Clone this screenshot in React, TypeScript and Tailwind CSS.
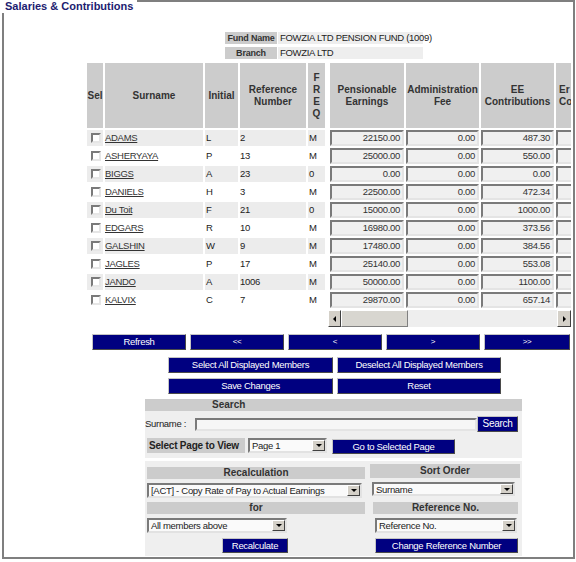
import React from "react";

type Row = [string, string, string, string, string, string, string, string];

const rows: Row[] = [
  ["ADAMS", "L", "2", "M", "22150.00", "0.00", "487.30", "0.00"],
  ["ASHERYAYA", "P", "13", "M", "25000.00", "0.00", "550.00", "0.00"],
  ["BIGGS", "A", "23", "0", "0.00", "0.00", "0.00", "0.00"],
  ["DANIELS", "H", "3", "M", "22500.00", "0.00", "472.34", "0.00"],
  ["Du Toit", "F", "21", "0", "15000.00", "0.00", "1000.00", "0.00"],
  ["EDGARS", "R", "10", "M", "16980.00", "0.00", "373.56", "0.00"],
  ["GALSHIN", "W", "9", "M", "17480.00", "0.00", "384.56", "0.00"],
  ["JAGLES", "P", "17", "M", "25140.00", "0.00", "553.08", "0.00"],
  ["JANDO", "A", "1006", "M", "50000.00", "0.00", "1100.00", "0.00"],
  ["KALVIX", "C", "7", "M", "29870.00", "0.00", "657.14", "0.00"],
];

function Btn({ label, className = "" }: { label: string; className?: string }) {
  return (
    <button
      className={`flex items-center justify-center bg-[#000080] text-white leading-none whitespace-nowrap border border-t-[#c4c4c4] border-l-[#c4c4c4] border-r-[#4a4a4a] border-b-[#4a4a4a] ${className}`}
    >
      {label}
    </button>
  );
}

function Select({ value, className = "" }: { value: string; className?: string }) {
  return (
    <div
      className={`flex items-stretch bg-[#fafafa] border-2 border-t-[#7a7a7a] border-l-[#7a7a7a] border-r-[#e2e2e2] border-b-[#e2e2e2] ${className}`}
    >
      <span className="flex-1 pl-[2px] truncate leading-[11px] self-center">{value}</span>
      <span className="w-[13px] flex items-center justify-center bg-[#d4d0c8] border border-t-white border-l-white border-r-[#404040] border-b-[#404040]">
        <span className="w-0 h-0 border-l-[3px] border-r-[3px] border-t-[3px] border-l-transparent border-r-transparent border-t-black" />
      </span>
    </div>
  );
}

function Head({ children, className = "" }: { children: React.ReactNode; className?: string }) {
  return (
    <div className={`bg-[#cccccc] font-bold text-[#333] text-center text-[10px] tracking-normal leading-[12px] ${className}`}>
      {children}
    </div>
  );
}

function FundLabel({ children }: { children: React.ReactNode }) {
  return (
    <div className="w-[52px] bg-[#cccccc] font-bold text-[#333] text-center text-[9px] tracking-[-0.2px] leading-[12px] whitespace-nowrap">
      {children}
    </div>
  );
}

export default function App() {
  return (
    <div className="w-[576px] h-[562px] bg-white overflow-hidden font-['Liberation_Sans',Arial,sans-serif] text-[9.5px] tracking-[-0.3px] text-[#222]">
      <div className="ml-[2px] w-[573px] h-[559px] border-2 border-[#7f7f7f]">
        <div className="-mt-[2px] -ml-[2px] w-fit bg-white pl-[3px] pr-[4px] h-[13px] text-[11px] tracking-normal leading-[12px] font-bold text-[#1c1c70]">
          Salaries &amp; Contributions
        </div>

        {/* fund info */}
        <div className="mt-[19px] ml-[221px] flex flex-col gap-[3px]">
          <div className="flex gap-[1px] h-[12px]">
            <FundLabel>Fund Name</FundLabel>
            <div className="w-[145px] bg-[#eeeeee] leading-[12px] pl-[2px] whitespace-nowrap">FOWZIA LTD PENSION FUND (1009)</div>
          </div>
          <div className="flex gap-[1px] h-[12px]">
            <FundLabel>Branch</FundLabel>
            <div className="w-[145px] bg-[#eeeeee] leading-[12px] pl-[2px]">FOWZIA LTD</div>
          </div>
        </div>

        {/* members table */}
        <div className="mt-[4px] ml-[83px] flex items-start">
          <div className="grid grid-cols-[16px_98px_33px_66px_17px] grid-rows-[65px] auto-rows-[16px] gap-[2px]">
            <Head className="flex items-center justify-center">Sel</Head>
            <Head className="flex items-center justify-center">Surname</Head>
            <Head className="flex items-center justify-center">Initial</Head>
            <Head className="flex items-center justify-center">
              Reference
              <br />
              Number
            </Head>
            <Head className="flex items-center justify-center leading-[10px]">
              F<br />R<br />E<br />Q
            </Head>
            {rows.map((r, i) => {
              const bg = i % 2 === 0 ? "bg-[#ececec]" : "bg-white";
              return (
                <React.Fragment key={r[0]}>
                  <div className={`${bg} flex items-center pl-[4px]`}>
                    <span className="w-[10px] h-[10px] bg-white border-2 border-t-[#7a7a7a] border-l-[#7a7a7a] border-r-[#e6e6e6] border-b-[#e6e6e6]" />
                  </div>
                  <div className={`${bg} leading-[16px] underline text-[#333]`}>{r[0]}</div>
                  <div className={`${bg} leading-[16px] pl-[1px]`}>{r[1]}</div>
                  <div className={`${bg} leading-[16px]`}>{r[2]}</div>
                  <div className={`${bg} leading-[16px] pl-[1px]`}>{r[3]}</div>
                </React.Fragment>
              );
            })}
          </div>

          <div className="ml-[3px] w-[243px] flex flex-col">
            <div className="w-[243px] overflow-hidden">
              <div className="pl-[2px] w-max grid grid-cols-[74px_73px_73px_74px] grid-rows-[65px] auto-rows-[16px] gap-[2px]">
                <Head className="flex items-center justify-center">
                  Pensionable
                  <br />
                  Earnings
                </Head>
                <Head className="flex items-center justify-center">
                  Administration
                  <br />
                  Fee
                </Head>
                <Head className="flex items-center justify-center">
                  EE
                  <br />
                  Contributions
                </Head>
                <Head className="flex items-center justify-start pl-[3px] text-left">
                  Er
                  <br />
                  Contributions
                </Head>
                {rows.map((r, i) => {
                  const bg = i % 2 === 0 ? "bg-[#ececec]" : "bg-white";
                  return (
                    <React.Fragment key={r[0]}>
                      {[r[4], r[5], r[6], r[7]].map((v, j) => (
                        <div key={j} className={bg}>
                          <div className="h-[16px] bg-[#f0f0f0] border-2 border-t-[#7a7a7a] border-l-[#7a7a7a] border-r-[#e4e4e4] border-b-[#e4e4e4] text-right pr-[2px] leading-[12px] text-[#333]">
                            {v}
                          </div>
                        </div>
                      ))}
                    </React.Fragment>
                  );
                })}
              </div>
            </div>
            {/* horizontal scrollbar */}
            <div className="mt-[2px] h-[17px] flex bg-[#eeeeee]">
              <div className="w-[13px] flex items-center justify-center bg-[#d4d0c8] border border-t-white border-l-white border-r-[#404040] border-b-[#404040]">
                <span className="w-0 h-0 border-t-[3px] border-b-[3px] border-r-[3px] border-t-transparent border-b-transparent border-r-black" />
              </div>
              <div className="w-[67px] bg-[#d8d6d0] border border-t-white border-l-white border-r-[#808080] border-b-[#808080]" />
              <div className="flex-1" />
              <div className="w-[14px] flex items-center justify-center bg-[#d4d0c8] border border-t-white border-l-white border-r-[#404040] border-b-[#404040]">
                <span className="w-0 h-0 border-t-[3px] border-b-[3px] border-l-[3px] border-t-transparent border-b-transparent border-l-black" />
              </div>
            </div>
          </div>
        </div>

        {/* paging */}
        <div className="mt-[7px] ml-[88px] flex gap-[4px]">
          <Btn label="Refresh" className="w-[94px] h-[16px]" />
          <Btn label="<<" className="w-[94px] h-[16px] text-[8px]" />
          <Btn label="<" className="w-[94px] h-[16px] text-[8px]" />
          <Btn label=">" className="w-[94px] h-[16px] text-[8px]" />
          <Btn label=">>" className="w-[86px] h-[16px] text-[8px]" />
        </div>
        <div className="mt-[7px] ml-[164px] flex gap-[4px]">
          <Btn label="Select All Displayed Members" className="w-[165px] h-[16px]" />
          <Btn label="Deselect All Displayed Members" className="w-[164px] h-[16px]" />
        </div>
        <div className="mt-[5px] ml-[164px] flex gap-[4px]">
          <Btn label="Save Changes" className="w-[165px] h-[16px]" />
          <Btn label="Reset" className="w-[164px] h-[16px]" />
        </div>

        {/* search */}
        <div className="mt-[5px] ml-[141px] w-[377px]">
          <div className="h-[12px] bg-[#cccccc] font-bold text-[10px] tracking-normal text-[#333] leading-[12px] pl-[67px]">Search</div>
          <div className="bg-[#efefef] pt-[5px] pb-[4px]">
            <div className="flex items-center h-[16px]">
              <span className="w-[50px] leading-[16px] whitespace-nowrap">Surname :</span>
              <div className="w-[282px] h-[13px] bg-[#f6f6f6] border-2 border-t-[#7a7a7a] border-l-[#7a7a7a] border-r-[#e4e4e4] border-b-[#e4e4e4]" />
              <Btn label="Search" className="w-[41px] h-[16px] text-[10px]" />
            </div>
            <div className="mt-[6px] flex items-start">
              <div className="ml-[2px] w-[98px] h-[15px] bg-[#cccccc] font-bold text-[10px] tracking-[-0.2px] leading-[15px] pl-[2px] text-[#222] whitespace-nowrap">Select Page to View</div>
              <Select value="Page 1" className="ml-[3px] w-[79px] h-[15px]" />
              <Btn label="Go to Selected Page" className="ml-[5px] mt-[1px] w-[123px] h-[15px]" />
            </div>
          </div>
        </div>

        {/* recalculation / sort */}
        <div className="mt-[3px] ml-[141px] w-[377px] h-[95px] bg-[#efefef] flex">
          <div className="w-[225px] pl-[2px] flex flex-col">
            <Head className="mt-[6px] w-[218px] h-[12px]">Recalculation</Head>
            <Select value="[ACT] - Copy Rate of Pay to Actual Earnings" className="mt-[4px] w-[215px] h-[15px]" />
            <Head className="mt-[4px] w-[218px] h-[12px]">for</Head>
            <Select value="All members above" className="mt-[4px] w-[140px] h-[15px]" />
            <Btn label="Recalculate" className="mt-[5px] ml-[75px] w-[66px] h-[15px]" />
          </div>
          <div className="flex flex-col">
            <Head className="mt-[3px] w-[150px] h-[14px] leading-[14px]">Sort Order</Head>
            <Select value="Surname" className="mt-[4px] ml-[2px] w-[143px] h-[14px]" />
            <Head className="mt-[6px] ml-[3px] w-[145px] h-[12px]">Reference No.</Head>
            <Select value="Reference No." className="mt-[4px] ml-[5px] w-[142px] h-[15px]" />
            <Btn label="Change Reference Number" className="mt-[5px] ml-[5px] w-[143px] h-[15px]" />
          </div>
        </div>
      </div>
    </div>
  );
}
